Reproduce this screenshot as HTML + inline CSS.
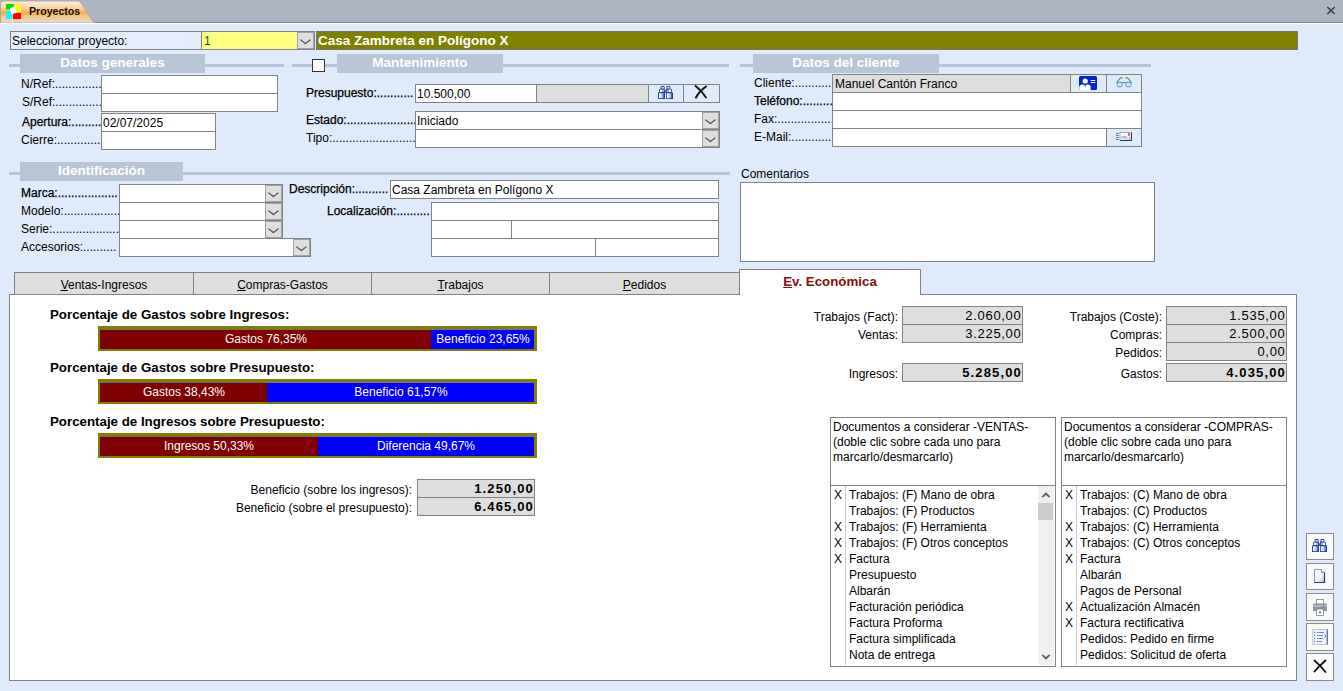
<!DOCTYPE html>
<html><head><meta charset="utf-8">
<style>
*{box-sizing:border-box;margin:0;padding:0}
html,body{width:1343px;height:691px;overflow:hidden}
body{background:#dfeafa;font-family:"Liberation Sans",sans-serif;font-size:12px;color:#000;position:relative}
.a{position:absolute}
.t{position:absolute;white-space:nowrap;line-height:14px}
.box{position:absolute;background:#fff;border:1px solid #828282}
.band{position:absolute;background:#b8c5d6;color:#fff;font-weight:bold;font-size:13.5px;text-align:center;line-height:18px;height:19px}
.line{position:absolute;background:#b8c5d6;height:3px}
.dd{position:absolute;background:#dedede;border:1px solid #a0a0a0;width:17px}
.dd::after{content:"";position:absolute;left:5px;top:3.5px;width:5px;height:5px;border-right:1px solid #4a4a4a;border-bottom:1px solid #4a4a4a;transform:translateX(-0.6px) scaleX(1.3) rotate(45deg)}
.hl{position:absolute;height:1px;background:#828282}
.vl{position:absolute;width:1px;background:#828282}
.sb{-webkit-text-stroke:0.25px #000}
.num{position:absolute;background:#dedede;border:1px solid #828282;text-align:right;padding-right:0.5px;font-size:13px;line-height:17px;letter-spacing:0.7px}
.num.b{font-weight:bold;letter-spacing:1.15px;padding-right:0}
</style></head><body>
<!-- top tab bar -->
<div class="a" style="left:0;top:0;width:1343px;height:22px;background:#adb5c2"></div>
<div class="a" style="left:0;top:22px;width:1343px;height:1px;background:#7f8590"></div>
<div class="a" style="left:0;top:23px;width:1343px;height:1px;background:#fff"></div>
<svg class="a" style="left:0;top:0" width="100" height="23">
<defs><linearGradient id="og" x1="0" y1="0" x2="0" y2="1">
<stop offset="0" stop-color="#fdeedf"/><stop offset="0.35" stop-color="#fbd09c"/><stop offset="0.52" stop-color="#f7a94f"/><stop offset="0.7" stop-color="#f2c68e"/><stop offset="1" stop-color="#e8dccb"/></linearGradient></defs>
<path d="M0.5,23 L0.5,4 Q0.5,1 3.5,1 L77.5,1 Q80,1 81.8,4 L92,20.5 Q93.3,22.5 95.5,22.5 L95.5,23 Z" fill="url(#og)" stroke="#a8a29c" stroke-width="0.8"/>
<rect x="6" y="4" width="8" height="5.5" fill="#00e000"/><rect x="15" y="4" width="6" height="8.2" fill="#ffff00"/>
<rect x="6" y="11" width="5.8" height="8" fill="#00ffff"/><rect x="13" y="13" width="8" height="6" fill="#ff0000"/>
<path d="M9.8,8.6 L15,6 L16.9,12.6 L11.6,14.6 Z" fill="#fff"/>
</svg>
<div class="t" style="left:29px;top:4px;font-weight:bold;font-size:10.6px;color:#111">Proyectos</div>
<svg class="a" style="left:1326px;top:6px" width="10" height="9"><path d="M1.3,1 L8.7,8 M8.7,1 L1.3,8" stroke="#363c48" stroke-width="1.5"/></svg>

<!-- select row -->
<div class="a" style="left:10px;top:31px;width:305px;height:19px;border:1px solid #828282;background:#e3edfb"></div>
<div class="t" style="left:12px;top:34px">Seleccionar proyecto:</div>
<div class="a" style="left:201px;top:32px;width:96px;height:17px;background:#ffff80;border-left:1px solid #828282"></div>
<div class="t" style="left:204px;top:34px;color:#053">1</div>
<div class="dd" style="left:297px;top:32px;height:17px;width:17px"></div>
<div class="a" style="left:316px;top:31px;width:982px;height:19px;background:#808000;border:1px solid #76766a"></div>
<div class="t" style="left:318px;top:34px;color:#fff;font-weight:bold;font-size:13.5px">Casa Zambreta en Polígono X</div>

<!-- section bands -->
<div class="line" style="left:9px;top:64px;width:275px"></div>
<div class="band" style="left:20px;top:54px;width:185px">Datos generales</div>
<div class="line" style="left:292px;top:64px;width:437px"></div>
<div class="band" style="left:337px;top:54px;width:166px">Mantenimiento</div>
<div class="a" style="left:312px;top:59px;width:13px;height:13px;background:#fff;border:1.5px solid #333"></div>
<div class="line" style="left:740px;top:64px;width:411px"></div>
<div class="band" style="left:753px;top:54px;width:186px">Datos del cliente</div>

<div class="line" style="left:9px;top:172px;width:721px"></div>
<div class="band" style="left:20px;top:162px;width:163px">Identificación</div>

<!-- Datos generales -->
<div class="t" style="left:21px;top:77px">N/Ref:...............</div>
<div class="t" style="left:22px;top:95px">S/Ref:...............</div>
<div class="t sb" style="left:22px;top:115px">Apertura:...........</div>
<div class="t" style="left:21px;top:133px">Cierre:..............</div>
<div class="box" style="left:101px;top:75px;width:177px;height:37px"></div>
<div class="hl" style="left:101px;top:93px;width:177px"></div>
<div class="box" style="left:101px;top:113px;width:115px;height:37px"></div>
<div class="hl" style="left:101px;top:131px;width:115px"></div>
<div class="t" style="left:103px;top:116px">02/07/2025</div>

<!-- Mantenimiento -->
<div class="t sb" style="left:306px;top:86px">Presupuesto:...........</div>
<div class="box" style="left:415px;top:84px;width:305px;height:19px"></div>
<div class="a" style="left:536px;top:85px;width:112px;height:17px;background:#dedede;border-left:1px solid #828282"></div>
<div class="vl" style="left:648px;top:84px;height:19px"></div>
<div class="vl" style="left:683px;top:84px;height:19px"></div>
<div class="t" style="left:417px;top:87px">10.500,00</div>
<div class="t sb" style="left:306px;top:113px">Estado:......................</div>
<div class="t" style="left:306px;top:131px">Tipo:...........................</div>
<div class="box" style="left:415px;top:111px;width:305px;height:37px"></div>
<div class="hl" style="left:415px;top:129px;width:305px"></div>
<div class="dd" style="left:702px;top:112px;height:17px"></div>
<div class="dd" style="left:702px;top:130px;height:17px"></div>
<div class="t" style="left:417px;top:114px">Iniciado</div>

<!-- Datos del cliente -->
<div class="t" style="left:754px;top:76px">Cliente:.............</div>
<div class="t sb" style="left:754px;top:94px">Teléfono:..........</div>
<div class="t" style="left:754px;top:112px">Fax:...................</div>
<div class="t" style="left:754px;top:130px">E-Mail:..............</div>
<div class="box" style="left:832px;top:74px;width:310px;height:73px"></div>
<div class="a" style="left:833px;top:75px;width:238px;height:17px;background:#dedede"></div>
<div class="hl" style="left:832px;top:92px;width:310px"></div>
<div class="hl" style="left:832px;top:110px;width:310px"></div>
<div class="hl" style="left:832px;top:128px;width:310px"></div>
<div class="vl" style="left:1070px;top:74px;height:18px"></div>
<div class="vl" style="left:1106px;top:74px;height:18px"></div>
<div class="vl" style="left:1106px;top:128px;height:18px"></div>
<div class="t" style="left:835px;top:77px">Manuel Cantón Franco</div>

<!-- Identificación -->
<div class="t sb" style="left:21px;top:186px">Marca:..................</div>
<div class="t" style="left:21px;top:204px">Modelo:.................</div>
<div class="t" style="left:21px;top:222px">Serie:....................</div>
<div class="t" style="left:21px;top:240px">Accesorios:..........</div>
<div class="box" style="left:119px;top:184px;width:164px;height:55px"></div>
<div class="hl" style="left:119px;top:202px;width:164px"></div>
<div class="hl" style="left:119px;top:220px;width:164px"></div>
<div class="box" style="left:119px;top:238px;width:192px;height:19px"></div>
<div class="dd" style="left:265px;top:185px;height:17px"></div>
<div class="dd" style="left:265px;top:203px;height:17px"></div>
<div class="dd" style="left:265px;top:221px;height:17px"></div>
<div class="dd" style="left:293px;top:239px;height:17px"></div>

<div class="t sb" style="left:289px;top:182px">Descripción:..........</div>
<div class="box" style="left:390px;top:180px;width:329px;height:19px"></div>
<div class="t" style="left:392px;top:183px">Casa Zambreta en Polígono X</div>
<div class="t sb" style="left:327px;top:204px">Localización:..........</div>
<div class="box" style="left:431px;top:202px;width:288px;height:55px"></div>
<div class="hl" style="left:431px;top:220px;width:288px"></div>
<div class="hl" style="left:431px;top:238px;width:288px"></div>
<div class="vl" style="left:511px;top:220px;height:18px"></div>
<div class="vl" style="left:595px;top:238px;height:18px"></div>

<!-- Comentarios -->
<div class="t" style="left:741px;top:167px">Comentarios</div>
<div class="box" style="left:740px;top:182px;width:415px;height:80px"></div>

<!-- tabs -->
<div class="a" style="left:9px;top:294px;width:1288px;height:387px;background:#fff;border:1px solid #828282"></div>
<div class="a" style="left:14px;top:272px;width:180px;height:22px;background:#dedede;border:1px solid #828282;border-bottom:none"></div>
<div class="a" style="left:193px;top:272px;width:179px;height:22px;background:#dedede;border:1px solid #828282;border-bottom:none"></div>
<div class="a" style="left:371px;top:272px;width:179px;height:22px;background:#dedede;border:1px solid #828282;border-bottom:none"></div>
<div class="a" style="left:549px;top:272px;width:191px;height:22px;background:#dedede;border:1px solid #828282;border-bottom:none"></div>
<div class="a" style="left:739px;top:269px;width:182px;height:26px;background:#fff;border:1px solid #828282;border-bottom:none"></div>
<div class="t" style="left:14px;top:278px;width:180px;text-align:center"><u>V</u>entas-Ingresos</div>
<div class="t" style="left:193px;top:278px;width:179px;text-align:center"><u>C</u>ompras-Gastos</div>
<div class="t" style="left:371px;top:278px;width:179px;text-align:center"><u>T</u>rabajos</div>
<div class="t" style="left:549px;top:278px;width:191px;text-align:center"><u>P</u>edidos</div>
<div class="t" style="left:739px;top:275px;width:182px;text-align:center;font-weight:bold;color:#8b0d0d;font-size:13.3px"><u>E</u>v. Económica</div>

<!-- bars -->
<div class="t" style="left:50px;top:308px;font-weight:bold;font-size:13.3px">Porcentaje de Gastos sobre Ingresos:</div>
<div class="a" style="left:98px;top:326px;width:439px;height:25px;background:#808000"></div>
<div class="a" style="left:100px;top:329px;width:331px;height:20px;background:#800000;box-shadow:inset 0 1px 0 #6f6f7a"></div>
<div class="a" style="left:431px;top:329px;width:103px;height:20px;background:#0000ff;box-shadow:inset 0 1px 0 #6f6f9a"></div>
<div class="t" style="left:101px;top:332px;width:330px;text-align:center;color:#fff">Gastos 76,35%</div>
<div class="t" style="left:431px;top:332px;width:104px;text-align:center;color:#fff">Beneficio 23,65%</div>

<div class="t" style="left:50px;top:361px;font-weight:bold;font-size:13.3px">Porcentaje de Gastos sobre Presupuesto:</div>
<div class="a" style="left:98px;top:379px;width:439px;height:25px;background:#808000"></div>
<div class="a" style="left:100px;top:382px;width:167px;height:20px;background:#800000;box-shadow:inset 0 1px 0 #6f6f7a"></div>
<div class="a" style="left:267px;top:382px;width:267px;height:20px;background:#0000ff;box-shadow:inset 0 1px 0 #6f6f9a"></div>
<div class="t" style="left:101px;top:385px;width:166px;text-align:center;color:#fff">Gastos 38,43%</div>
<div class="t" style="left:267px;top:385px;width:268px;text-align:center;color:#fff">Beneficio 61,57%</div>

<div class="t" style="left:50px;top:415px;font-weight:bold;font-size:13.3px">Porcentaje de Ingresos sobre Presupuesto:</div>
<div class="a" style="left:98px;top:433px;width:439px;height:25px;background:#808000"></div>
<div class="a" style="left:100px;top:436px;width:218px;height:20px;background:#800000;box-shadow:inset 0 1px 0 #6f6f7a"></div>
<div class="a" style="left:318px;top:436px;width:216px;height:20px;background:#0000ff;box-shadow:inset 0 1px 0 #6f6f9a"></div>
<div class="t" style="left:100px;top:439px;width:218px;text-align:center;color:#fff">Ingresos 50,33%</div>
<div class="t" style="left:318px;top:439px;width:216px;text-align:center;color:#fff">Diferencia 49,67%</div>

<div class="t" style="left:200px;top:483px;width:212px;text-align:right">Beneficio (sobre los ingresos):</div>
<div class="t" style="left:200px;top:501px;width:212px;text-align:right">Beneficio (sobre el presupuesto):</div>
<div class="num b" style="left:417px;top:479px;width:118px;height:19px">1.250,00</div>
<div class="num b" style="left:417px;top:497px;width:118px;height:19px">6.465,00</div>

<!-- totals -->
<div class="t" style="left:700px;top:310px;width:198px;text-align:right">Trabajos (Fact):</div>
<div class="t" style="left:700px;top:328px;width:198px;text-align:right">Ventas:</div>
<div class="t" style="left:700px;top:367px;width:198px;text-align:right">Ingresos:</div>
<div class="num" style="left:902px;top:306px;width:121px;height:19px">2.060,00</div>
<div class="num" style="left:902px;top:324px;width:121px;height:19px">3.225,00</div>
<div class="num b" style="left:902px;top:363px;width:121px;height:19px">5.285,00</div>

<div class="t" style="left:962px;top:310px;width:200px;text-align:right">Trabajos (Coste):</div>
<div class="t" style="left:962px;top:328px;width:200px;text-align:right">Compras:</div>
<div class="t" style="left:962px;top:346px;width:200px;text-align:right">Pedidos:</div>
<div class="t" style="left:962px;top:367px;width:200px;text-align:right">Gastos:</div>
<div class="num" style="left:1166px;top:306px;width:121px;height:19px">1.535,00</div>
<div class="num" style="left:1166px;top:324px;width:121px;height:19px">2.500,00</div>
<div class="num" style="left:1166px;top:342px;width:121px;height:19px">0,00</div>
<div class="num b" style="left:1166px;top:363px;width:121px;height:19px">4.035,00</div>

<!-- lists -->
<div class="box" style="left:830px;top:417px;width:226px;height:250px"></div>
<div class="hl" style="left:830px;top:485px;width:226px"></div>
<div class="t" style="left:833px;top:420px;line-height:15px">Documentos a considerar -VENTAS-<br>(doble clic sobre cada uno para<br>marcarlo/desmarcarlo)</div>
<div class="a" style="left:845px;top:486px;width:1px;height:179px;background:#c8c8c8"></div>
<div class="t" style="left:834px;top:488px">X</div>
<div class="t" style="left:849px;top:488px">Trabajos: (F) Mano de obra</div>
<div class="t" style="left:849px;top:504px">Trabajos: (F) Productos</div>
<div class="t" style="left:834px;top:520px">X</div>
<div class="t" style="left:849px;top:520px">Trabajos: (F) Herramienta</div>
<div class="t" style="left:834px;top:536px">X</div>
<div class="t" style="left:849px;top:536px">Trabajos: (F) Otros conceptos</div>
<div class="t" style="left:834px;top:552px">X</div>
<div class="t" style="left:849px;top:552px">Factura</div>
<div class="t" style="left:849px;top:568px">Presupuesto</div>
<div class="t" style="left:849px;top:584px">Albarán</div>
<div class="t" style="left:849px;top:600px">Facturación periódica</div>
<div class="t" style="left:849px;top:616px">Factura Proforma</div>
<div class="t" style="left:849px;top:632px">Factura simplificada</div>
<div class="t" style="left:849px;top:648px">Nota de entrega</div>
<div class="box" style="left:1061px;top:417px;width:226px;height:250px"></div>
<div class="hl" style="left:1061px;top:485px;width:226px"></div>
<div class="t" style="left:1064px;top:420px;line-height:15px">Documentos a considerar -COMPRAS-<br>(doble clic sobre cada uno para<br>marcarlo/desmarcarlo)</div>
<div class="a" style="left:1076px;top:486px;width:1px;height:179px;background:#c8c8c8"></div>
<div class="t" style="left:1065px;top:488px">X</div>
<div class="t" style="left:1080px;top:488px">Trabajos: (C) Mano de obra</div>
<div class="t" style="left:1080px;top:504px">Trabajos: (C) Productos</div>
<div class="t" style="left:1065px;top:520px">X</div>
<div class="t" style="left:1080px;top:520px">Trabajos: (C) Herramienta</div>
<div class="t" style="left:1065px;top:536px">X</div>
<div class="t" style="left:1080px;top:536px">Trabajos: (C) Otros conceptos</div>
<div class="t" style="left:1065px;top:552px">X</div>
<div class="t" style="left:1080px;top:552px">Factura</div>
<div class="t" style="left:1080px;top:568px">Albarán</div>
<div class="t" style="left:1080px;top:584px">Pagos de Personal</div>
<div class="t" style="left:1065px;top:600px">X</div>
<div class="t" style="left:1080px;top:600px">Actualización Almacén</div>
<div class="t" style="left:1065px;top:616px">X</div>
<div class="t" style="left:1080px;top:616px">Factura rectificativa</div>
<div class="t" style="left:1080px;top:632px">Pedidos: Pedido en firme</div>
<div class="t" style="left:1080px;top:648px">Pedidos: Solicitud de oferta</div>


<!-- scrollbar ventas -->
<div class="a" style="left:1038px;top:486px;width:16px;height:179px;background:#f0f0f0"></div>
<div class="a" style="left:1038px;top:503px;width:15px;height:17px;background:#cdcdcd"></div>
<svg class="a" style="left:1041px;top:491px" width="10" height="8"><path d="M1.3,6.2 L5,2.5 L8.7,6.2" fill="none" stroke="#606060" stroke-width="1.9"/></svg>
<svg class="a" style="left:1041px;top:653px" width="10" height="8"><path d="M1.3,1.8 L5,5.5 L8.7,1.8" fill="none" stroke="#606060" stroke-width="1.9"/></svg>

<!-- right buttons -->
<svg width="0" height="0" style="position:absolute">
<defs>
<linearGradient id="bg1" x1="0" y1="0" x2="1" y2="0"><stop offset="0" stop-color="#ffffff"/><stop offset="0.6" stop-color="#b9c9ee"/><stop offset="1" stop-color="#2a48b0"/></linearGradient>
<symbol id="bino" viewBox="0 0 15 13">
<path d="M2.6,3 V1.2 Q2.6,0 3.8,0 H5.4 Q6.6,0 6.6,1.2 V3 H7 V13 H0 V6.5 H1.2 V3 Z" fill="#1c3c9c"/>
<path d="M12.4,3 V1.2 Q12.4,0 11.2,0 H9.6 Q8.4,0 8.4,1.2 V3 H8 V13 H15 V6.5 H13.8 V3 Z" fill="#1c3c9c"/>
<rect x="6.5" y="4.3" width="2" height="2.4" fill="#2a4aa8"/>
<rect x="3.5" y="0.9" width="2.2" height="1.6" fill="#e8eefc"/><rect x="9.3" y="0.9" width="2.2" height="1.6" fill="#e8eefc"/>
<rect x="2" y="3.6" width="2.4" height="2.4" fill="#ffffff"/><rect x="4.4" y="3.6" width="1.8" height="2.4" fill="#9fb3e6"/>
<rect x="10.6" y="3.6" width="2.4" height="2.4" fill="#ffffff"/><rect x="8.8" y="3.6" width="1.8" height="2.4" fill="#9fb3e6"/>
<rect x="0.9" y="7.2" width="5.3" height="5" fill="url(#bg1)"/><rect x="8.8" y="7.2" width="5.3" height="5" fill="url(#bg1)"/>
</symbol>
</defs></svg>
<div class="a" style="left:1306px;top:533px;width:28px;height:27px;background:#fafafa;border:1px solid #8c8c8c"></div>
<div class="a" style="left:1306px;top:563px;width:28px;height:27px;background:#fafafa;border:1px solid #8c8c8c"></div>
<div class="a" style="left:1306px;top:593px;width:28px;height:28px;background:#fafafa;border:1px solid #8c8c8c"></div>
<div class="a" style="left:1306px;top:623px;width:28px;height:28px;background:#fafafa;border:1px solid #8c8c8c"></div>
<div class="a" style="left:1306px;top:653px;width:28px;height:28px;background:#fafafa;border:1px solid #8c8c8c"></div>
<svg class="a" style="left:1312px;top:539px" width="15" height="13"><use href="#bino"/></svg>
<!-- document -->
<svg class="a" style="left:1313px;top:568px" width="13" height="16" viewBox="0 0 13 16">
<defs><linearGradient id="dg" x1="0" y1="0" x2="1" y2="1"><stop offset="0" stop-color="#ffffff"/><stop offset="0.6" stop-color="#f0f2f6"/><stop offset="1" stop-color="#b8c0cc"/></linearGradient></defs>
<path d="M1.5,1.5 H8.5 L11.5,4.5 V14.5 H1.5 Z" fill="url(#dg)" stroke="#8a9ab5" stroke-width="1"/>
<path d="M11.5,4.5 V14.5 H1.5" fill="none" stroke="#2b3f66" stroke-width="1.2"/>
<path d="M8.5,1.5 V4.5 H11.5" fill="#fff" stroke="#5a6d90" stroke-width="0.8"/>
</svg>
<!-- printer -->
<svg class="a" style="left:1312px;top:599px" width="16" height="17" viewBox="0 0 16 17">
<rect x="4.5" y="0.5" width="7" height="5" fill="#fff" stroke="#7a7f88" stroke-width="0.8"/>
<path d="M1,6 Q1,4.5 2.5,4.5 H13.5 Q15,4.5 15,6 V12 H1 Z" fill="#8d939b"/>
<rect x="1" y="6" width="14" height="2" fill="#b5bac1"/>
<rect x="10" y="7" width="3" height="1" fill="#3b8fd9"/>
<rect x="4.5" y="10" width="7" height="6.5" fill="#fff" stroke="#7a7f88" stroke-width="0.8"/>
<rect x="7" y="12.5" width="2" height="2" fill="#3b8fd9"/>
</svg>
<!-- list -->
<svg class="a" style="left:1312px;top:629px" width="16" height="16" viewBox="0 0 16 16">
<rect x="0.5" y="0.5" width="15" height="15" fill="#f0f4fa" stroke="#a9b6c8" stroke-width="0.8"/>
<path d="M15.2,0.5 V15.5" stroke="#3d5580" stroke-width="1"/>
<rect x="0.5" y="0.5" width="3" height="15" fill="#e4e9f0"/>
<path d="M2,3.5 h1 M2,6.5 h1 M2,9.5 h1 M2,12.5 h1" stroke="#6a7a90" stroke-width="1"/>
<path d="M5,3.5 h7 M5,6.5 h6 M5,9.5 h6 M5,12.5 h5" stroke="#6a8fd0" stroke-width="1"/>
<path d="M12.5,5.5 l1.5,1.5 l-1.5,1.5" fill="none" stroke="#6a7a90" stroke-width="0.9"/>
</svg>
<!-- close X -->
<svg class="a" style="left:1313px;top:659px" width="14" height="14" viewBox="0 0 14 14"><path d="M1.5,1.5 Q7,6 12.5,13" fill="none" stroke="#111" stroke-width="1.7" stroke-linecap="round"/><path d="M12.5,1.5 Q6,7 1.5,12.5" fill="none" stroke="#111" stroke-width="1.9" stroke-linecap="round"/></svg>

<!-- presupuesto icons -->
<div class="a" style="left:649px;top:85px;width:34px;height:17px;background:#dfeafa"></div>
<div class="a" style="left:684px;top:85px;width:35px;height:17px;background:#dfeafa"></div>
<svg class="a" style="left:658px;top:86px" width="15" height="13"><use href="#bino"/></svg>
<svg class="a" style="left:694px;top:85px" width="14" height="14" viewBox="0 0 14 14"><path d="M1.5,1 Q7,5 12,12.5" fill="none" stroke="#151515" stroke-width="1.8" stroke-linecap="round"/><path d="M12,1.5 Q5,6.5 2,12.5" fill="none" stroke="#151515" stroke-width="2.1" stroke-linecap="round"/></svg>
<!-- cliente icons -->
<div class="a" style="left:1071px;top:75px;width:35px;height:17px;background:#dfeafa"></div>
<div class="a" style="left:1107px;top:75px;width:34px;height:17px;background:#dfeafa"></div>
<div class="a" style="left:1107px;top:129px;width:34px;height:17px;background:#dfeafa"></div>
<svg class="a" style="left:1079px;top:76px" width="18" height="14" viewBox="0 0 18 14">
<rect x="0" y="0" width="18" height="14" rx="1.5" fill="#0026cc"/>
<circle cx="6.2" cy="5" r="2.6" fill="#fff"/>
<path d="M0.3,14 V10.5 Q1,8.5 3.5,8.2 L6.2,9.5 L8.9,8.2 Q11.4,8.5 11.6,10.5 V14 Z" fill="#fff"/>
<path d="M6.2,9.3 v2" stroke="#0026cc" stroke-width="0.6"/>
<path d="M11.7,4.5 h4.5 M11.7,6.5 h4.5" stroke="#fff" stroke-width="1"/>
</svg>
<svg class="a" style="left:1116px;top:77px" width="17" height="11" viewBox="0 0 17 11">
<path d="M0.6,5.6 L4.6,0.9 Q5.5,0.2 6.5,1.4 M15.6,5.6 L11.6,0.9 Q10.7,0.2 9.7,1.4" fill="none" stroke="#3f9a5e" stroke-width="1.1"/>
<path d="M6.4,5.5 H9.8" stroke="#3f9a5e" stroke-width="1"/>
<path d="M1,5.4 H6.5 L6.1,8.7 Q5.9,9.8 4.9,9.8 H2.6 Q1.6,9.8 1.4,8.7 Z" fill="#c9ecfa" stroke="#5d8cd6" stroke-width="1"/>
<path d="M9.7,5.4 H15.2 L14.8,8.7 Q14.6,9.8 13.6,9.8 H11.3 Q10.3,9.8 10.1,8.7 Z" fill="#c9ecfa" stroke="#5d8cd6" stroke-width="1"/>
</svg>
<svg class="a" style="left:1116px;top:132px" width="16" height="9" viewBox="0 0 16 9">
<path d="M0.3,1.5 h2.2 M0.3,3.5 h2.2 M0.3,5.5 h2.2 M0.3,7.5 h2.2" stroke="#4a5f9a" stroke-width="1"/>
<defs><linearGradient id="eg" x1="0" y1="0" x2="1" y2="1"><stop offset="0" stop-color="#fff"/><stop offset="0.5" stop-color="#f4f6fb"/><stop offset="1" stop-color="#aab4d8"/></linearGradient></defs>
<rect x="4" y="0.5" width="11.5" height="8" fill="url(#eg)" stroke="#7b8aa6" stroke-width="0.7"/>
<path d="M15.5,0.5 V8.5 H4" fill="none" stroke="#243a60" stroke-width="1"/>
<rect x="12" y="1.5" width="2" height="2" fill="#e03a10"/>
<path d="M5.5,4.8 h5.5 M5.5,5.8 h4.5" stroke="#8a94a8" stroke-width="0.8"/>
</svg>
</body></html>
